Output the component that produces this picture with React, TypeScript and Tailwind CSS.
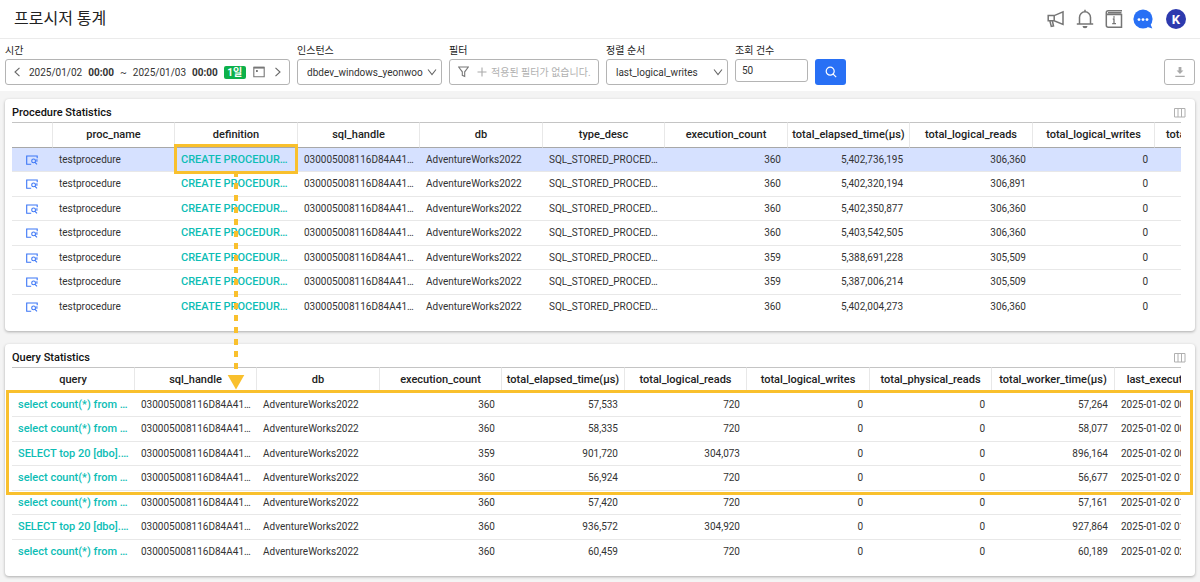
import type { ReactNode } from 'react';

type Align = 'left' | 'right' | 'link' | 'icon';
type Column = { name: string; align: Align };

const HANDLE = '030005008116D84A41…';

const procedureColumns: Column[] = [
  { name: '', align: 'icon' },
  { name: 'proc_name', align: 'left' },
  { name: 'definition', align: 'link' },
  { name: 'sql_handle', align: 'left' },
  { name: 'db', align: 'left' },
  { name: 'type_desc', align: 'left' },
  { name: 'execution_count', align: 'right' },
  { name: 'total_elapsed_time(µs)', align: 'right' },
  { name: 'total_logical_reads', align: 'right' },
  { name: 'total_logical_writes', align: 'right' },
  { name: 'total_physical_reads', align: 'right' },
];

const procedureRows = [
  ['360', '5,402,736,195', '306,360'],
  ['360', '5,402,320,194', '306,891'],
  ['360', '5,402,350,877', '306,360'],
  ['360', '5,403,542,505', '306,360'],
  ['359', '5,388,691,228', '305,509'],
  ['359', '5,387,006,214', '305,509'],
  ['360', '5,402,004,273', '306,360'],
].map(([count, elapsed, reads]) => [
  '',
  'testprocedure',
  'CREATE PROCEDUR…',
  HANDLE,
  'AdventureWorks2022',
  'SQL_STORED_PROCED…',
  count,
  elapsed,
  reads,
  '0',
  '',
]);

const queryColumns: Column[] = [
  { name: 'query', align: 'link' },
  { name: 'sql_handle', align: 'left' },
  { name: 'db', align: 'left' },
  { name: 'execution_count', align: 'right' },
  { name: 'total_elapsed_time(µs)', align: 'right' },
  { name: 'total_logical_reads', align: 'right' },
  { name: 'total_logical_writes', align: 'right' },
  { name: 'total_physical_reads', align: 'right' },
  { name: 'total_worker_time(µs)', align: 'right' },
  { name: 'last_execution_time', align: 'left' },
];

const COUNT_QUERY = 'select count(*) from …';
const TOP_QUERY = 'SELECT top 20 [dbo].…';

const queryRows = [
  [COUNT_QUERY, '360', '57,533', '720', '57,264', '2025-01-02 00:00'],
  [COUNT_QUERY, '360', '58,335', '720', '58,077', '2025-01-02 00:00'],
  [TOP_QUERY, '359', '901,720', '304,073', '896,164', '2025-01-02 00:00'],
  [COUNT_QUERY, '360', '56,924', '720', '56,677', '2025-01-02 01:00'],
  [COUNT_QUERY, '360', '57,420', '720', '57,161', '2025-01-02 01:00'],
  [TOP_QUERY, '360', '936,572', '304,920', '927,864', '2025-01-02 01:00'],
  [COUNT_QUERY, '360', '60,459', '720', '60,189', '2025-01-02 02:00'],
].map(([query, count, elapsed, reads, worker, last]) => [
  query,
  HANDLE,
  'AdventureWorks2022',
  count,
  elapsed,
  reads,
  '0',
  '0',
  worker,
  last,
]);

function DetailIcon() {
  return (
    <svg width="12" height="10" viewBox="0 0 12 10" fill="none" stroke="#3b76f6" strokeWidth="1.1">
      <path d="M5.200 9.200H.7V1h10.500v2.200" />
      <circle cx="7.600" cy="5.900" r="1.900" />
      <path d="M9 7.300l2 2M10.900 4.200v2.600" />
    </svg>
  );
}

function ColumnsIcon() {
  return (
    <svg width="12" height="10" viewBox="0 0 12 10" fill="none" stroke="#b0b0b0" strokeWidth="1">
      <path d="M.5 .5h10.500v8.500H.5zM4 .5v8.500M7.500 .5v8.500" />
    </svg>
  );
}

function Chevron({ d }: { d: string }) {
  return (
    <svg width="10" height="10" viewBox="0 0 10 10" fill="none" stroke="#666" strokeWidth="1.1">
      <path d={d} />
    </svg>
  );
}

function DataTable({
  title,
  columns,
  rows,
  selected,
}: {
  title: string;
  columns: Column[];
  rows: string[][];
  selected?: number;
}) {
  const hasIcon = columns[0].align === 'icon';
  return (
    <section className="rounded bg-white pr-[14px] pb-3 pl-[7px] shadow-[0_1px_3px_rgba(0,0,0,0.3)]">
      <div className="flex h-[23px] items-center justify-between pt-1">
        <h2 className="text-[11px] leading-4 font-medium text-[#111]">{title}</h2>
        <button type="button" aria-label={`${title} columns`} className="-mr-[5px]">
          <ColumnsIcon />
        </button>
      </div>
      <div className="overflow-hidden">
        <table
          className={`table-fixed border-separate border-spacing-0 text-[10px] leading-4 text-[#333] ${
            hasIcon ? 'w-[1266px]' : 'w-[1225px]'
          }`}
        >
          <colgroup>
            {columns.map((c, i) => (
              <col
                key={c.name}
                className={c.align === 'icon' ? 'w-[41px]' : i % 2 === 0 ? 'w-[123px]' : 'w-[122px]'}
              />
            ))}
          </colgroup>
          <thead>
            <tr>
              {columns.map((c) => (
                <th
                  key={c.name}
                  scope="col"
                  aria-label={c.name || 'detail'}
                  className="h-[26px] border-t border-r border-b border-t-[#c4c4c4] border-r-[#e8e8e8] border-b-[#a8a8a8] p-0 text-center text-[11px] font-medium whitespace-nowrap text-[#222]"
                >
                  {c.name}
                </th>
              ))}
            </tr>
          </thead>
          <tbody className="[&>tr:last-child>td]:border-transparent [&>tr:nth-child(even)>td]:h-[25px] [&>tr:nth-child(odd)>td]:h-6">
            {rows.map((row, r) => (
              <tr key={r} className={r === selected ? 'bg-[#d6e1ff]' : ''}>
                {row.map((value, i) => {
                  const align = columns[i].align;
                  return (
                    <td
                      key={i}
                      className={`border-b border-[#e8e8e8] py-0 pr-[7px] pl-[6px] whitespace-nowrap ${
                        align === 'right' ? 'text-right' : 'text-left'
                      }`}
                    >
                      {align === 'icon' ? (
                        <button type="button" aria-label="Open detail" className="ml-2 block">
                          <DetailIcon />
                        </button>
                      ) : align === 'link' ? (
                        <a href="#" className="text-[11px] font-medium text-[#0dbdb5]">
                          {value}
                        </a>
                      ) : (
                        value
                      )}
                    </td>
                  );
                })}
              </tr>
            ))}
          </tbody>
        </table>
      </div>
    </section>
  );
}

function Field({ label, id, className, children }: { label: string; id: string; className: string; children: ReactNode }) {
  return (
    <div className={`flex flex-col gap-[1px] ${className}`}>
      <label htmlFor={id} className="text-[10px] leading-[14px] text-[#222]">
        {label}
      </label>
      {children}
    </div>
  );
}

function SelectBox({ id, value }: { id: string; value: string }) {
  return (
    <div className="relative">
      <select
        id={id}
        className="block h-[26px] w-full appearance-none rounded-[3px] border border-[#b4b4b4] bg-white pr-4 pl-[9px] text-[10px] text-[#333]"
      >
        <option>{value}</option>
      </select>
      <span className="pointer-events-none absolute inset-y-0 right-[5px] flex items-center">
        <Chevron d="M1 2.500l4 5 4-5" />
      </span>
    </div>
  );
}

function HeaderIcons() {
  return (
    <div className="flex items-center gap-[9px]">
      <button type="button" aria-label="Announcements">
        <svg width="20" height="20" viewBox="0 0 20 20" fill="none" stroke="#757575" strokeWidth="1.500">
          <path d="M2.200 6.600h6l8.800-3.800v12.600l-8.800-3.700h-6zM8.200 6.600v5.100" />
          <path d="M3.900 12l1.400 5.400 2.200-.4-1.100-5" />
        </svg>
      </button>
      <button type="button" aria-label="Notifications">
        <svg width="20" height="20" viewBox="0 0 20 20" fill="none" stroke="#757575" strokeWidth="1.500">
          <path d="M1.800 15h16.400M4.500 15V8.300a5.500 5.500 0 0 1 11 0V15M10 2.800V.8" />
          <path d="M7.500 17h5a2.500 2.200 0 0 1-5 0z" fill="#757575" stroke="none" />
        </svg>
      </button>
      <button type="button" aria-label="Guide">
        <svg width="20" height="20" viewBox="0 0 20 20" fill="none" stroke="#757575" strokeWidth="1.500">
          <path d="M18 1.800H4.200a1.900 1.900 0 0 0 0 3.800h13.300v12.600H4.300a2 2 0 0 1-2-2V3.700M4 3.700h13.500" />
          <path d="M8.800 10H10v4.600M8.200 14.600h3.800M9.300 8h1.400" strokeWidth="1.300" />
        </svg>
      </button>
      <button type="button" aria-label="Chat">
        <svg width="20" height="20" viewBox="0 0 20 20" fill="#2870f5">
          <circle cx="10" cy="10" r="9.600" />
          <path d="M13 17.500l6.300 2-2.300-5.500z" />
          <g fill="#fff">
            <circle cx="6" cy="10.600" r="1.400" />
            <circle cx="10" cy="10.600" r="1.400" />
            <circle cx="14" cy="10.600" r="1.400" />
          </g>
        </svg>
      </button>
      <button
        type="button"
        className="ml-1 flex size-5 items-center justify-center rounded-full bg-[#2d3aae] text-[13px] leading-none font-bold text-white"
      >
        K
      </button>
    </div>
  );
}

export default function App() {
  return (
    <div className="min-h-screen bg-[#f4f4f4] font-[Roboto,'Noto_Sans_CJK_KR',sans-serif] text-[#333]">
      <header className="flex h-[39px] items-center justify-between border-b border-[#ebebeb] bg-white px-[14px]">
        <h1 className="text-[16px] leading-6 text-[#222]">프로시저 통계</h1>
        <HeaderIcons />
      </header>

      <div className="flex items-start gap-[7px] bg-white px-[5px] pt-[5px] pb-[6px]">
        <Field label="시간" id="range" className="w-[285px]">
          <div className="flex h-[26px] items-center rounded-[3px] border border-[#b4b4b4] px-[6px] text-[10px]">
            <button type="button" aria-label="Previous">
              <Chevron d="M7.500 .8L3 5l4.500 4.200" />
            </button>
            <button id="range" type="button" className="ml-[7px] flex items-center gap-[6px] whitespace-nowrap">
              <span>2025/01/02</span>
              <span className="font-bold">00:00</span>
              <span>~</span>
              <span>2025/01/03</span>
              <span className="font-bold">00:00</span>
              <span className="flex h-[13px] w-[22px] items-center justify-center rounded-[2px] bg-[#0db14b] font-bold text-white">
                1일
              </span>
            </button>
            <button type="button" aria-label="Calendar" className="ml-auto">
              <svg width="12" height="12" viewBox="0 0 12 12" fill="none" stroke="#777" strokeWidth="1.100">
                <path d="M.8 1.300h10.400v9.400H.8z" />
                <path d="M.8 1.700h10.400" strokeWidth="1.800" />
                <path d="M3 5h1.800" strokeWidth="1.800" />
              </svg>
            </button>
            <button type="button" aria-label="Next" className="ml-2">
              <Chevron d="M2.500 .8L7 5l-4.500 4.200" />
            </button>
          </div>
        </Field>
        <Field label="인스턴스" id="instance" className="w-[145px]">
          <SelectBox id="instance" value="dbdev_windows_yeonwoo" />
        </Field>
        <Field label="필터" id="filter" className="w-[150px]">
          <button
            id="filter"
            type="button"
            className="flex h-[26px] items-center rounded-[3px] border border-[#b4b4b4] pl-2 text-[10px] whitespace-nowrap text-[#b0b0b0]"
          >
            <svg width="11" height="12" viewBox="0 0 11 12" fill="none" stroke="#777" strokeWidth="1.100">
              <path d="M.6 1h9.800L6.700 5.800v4.600L4.300 9.300V5.800z" />
            </svg>
            <svg width="10" height="10" viewBox="0 0 10 10" className="mr-1 ml-2" stroke="#aaa" strokeWidth="1.100">
              <path d="M5 .5v9M.5 5h9" />
            </svg>
            적용된 필터가 없습니다.
          </button>
        </Field>
        <Field label="정렬 순서" id="sort" className="w-[122px]">
          <SelectBox id="sort" value="last_logical_writes" />
        </Field>
        <Field label="조회 건수" id="limit" className="w-[73px]">
          <input
            id="limit"
            defaultValue="50"
            className="h-[23px] w-full rounded-[3px] border border-[#b4b4b4] px-[6px] text-[10px] text-[#333]"
          />
        </Field>
        <button
          type="button"
          aria-label="Search"
          className="mt-[15px] flex h-[26px] w-[31px] items-center justify-center rounded-[3px] bg-[#2870f5]"
        >
          <svg width="12" height="12" viewBox="0 0 12 12" fill="none" stroke="#fff" strokeWidth="1.200">
            <circle cx="5.200" cy="5.200" r="4" />
            <path d="M8.200 8.200l3 3" />
          </svg>
        </button>
        <button
          type="button"
          aria-label="Download"
          className="mt-[15px] ml-auto flex h-[26px] w-[31px] items-center justify-center rounded-[3px] border border-[#b4b4b4]"
        >
          <svg width="10" height="12" viewBox="0 0 10 12" fill="#aaa">
            <path d="M3.600 1h2.800v3.500h2L5 8 1.600 4.500h2zM.3 9.800h9.400v1.100H.3z" />
          </svg>
        </button>
      </div>

      <main className="relative flex flex-col gap-[13px] px-[5px] pt-[8px] pb-[6px]">
        <DataTable title="Procedure Statistics" columns={procedureColumns} rows={procedureRows} selected={0} />
        <DataTable title="Query Statistics" columns={queryColumns} rows={queryRows} />

        <div className="pointer-events-none absolute top-[53px] left-[174px] h-[30px] w-[124px] border-3 border-[#f9c02d]" />
        <svg
          className="pointer-events-none absolute top-[80px] left-[227px]"
          width="18"
          height="219"
          viewBox="0 0 18 219"
        >
          <path d="M9 0V200" stroke="#f9c02d" strokeWidth="4" strokeDasharray="6 6" />
          <path d="M.7 204h16.600L9 218.500z" fill="#f9c02d" />
        </svg>
        <div className="pointer-events-none absolute top-[299px] right-[7px] left-[6px] h-[105px] border-3 border-[#f9c02d]" />
      </main>
    </div>
  );
}
